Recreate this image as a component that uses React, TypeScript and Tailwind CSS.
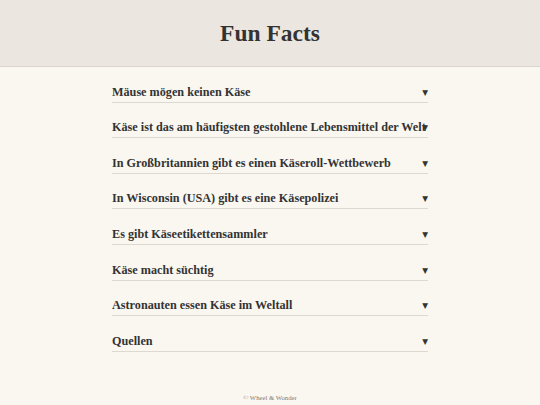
import React from 'react';

const facts = [
    'Mäuse mögen keinen Käse',
    'Käse ist das am häufigsten gestohlene Lebensmittel der Welt',
    'In Großbritannien gibt es einen Käseroll-Wettbewerb',
    'In Wisconsin (USA) gibt es eine Käsepolizei',
    'Es gibt Käseetikettensammler',
    'Käse macht süchtig',
    'Astronauten essen Käse im Weltall',
    'Quellen',
];

export default function App() {
    return (
        <div className="min-h-[405px] bg-[#faf7f1] text-[#333] flex flex-col" style={{ fontFamily: '"Liberation Serif", Georgia, serif' }}>
            <header className="h-[67px] bg-[#ebe6df] border-b border-[#dcd6cd] flex items-center justify-center">
                <h1 className="text-[23.5px] font-bold leading-none text-[#333] pt-px">Fun Facts</h1>
            </header>

            <main className="w-[316px] mx-auto flex-1">
                {facts.map((f) => (
                    <div key={f} className="relative h-[35.6px] flex items-end pb-[3px] border-b border-[#ddd8d0]">
                        <span className="text-[12.2px] leading-[14px] font-bold whitespace-nowrap">{f}</span>
                        <span className="absolute right-0 bottom-[5px] text-[7.5px] leading-[9px]" style={{ fontFamily: '"DejaVu Sans", sans-serif' }}>▼</span>
                    </div>
                ))}
            </main>

            <footer className="text-center text-[6.7px] leading-[8px] text-[#7f7a74] pb-[3px]">© Wheel &amp; Wonder</footer>
        </div>
    );
}
